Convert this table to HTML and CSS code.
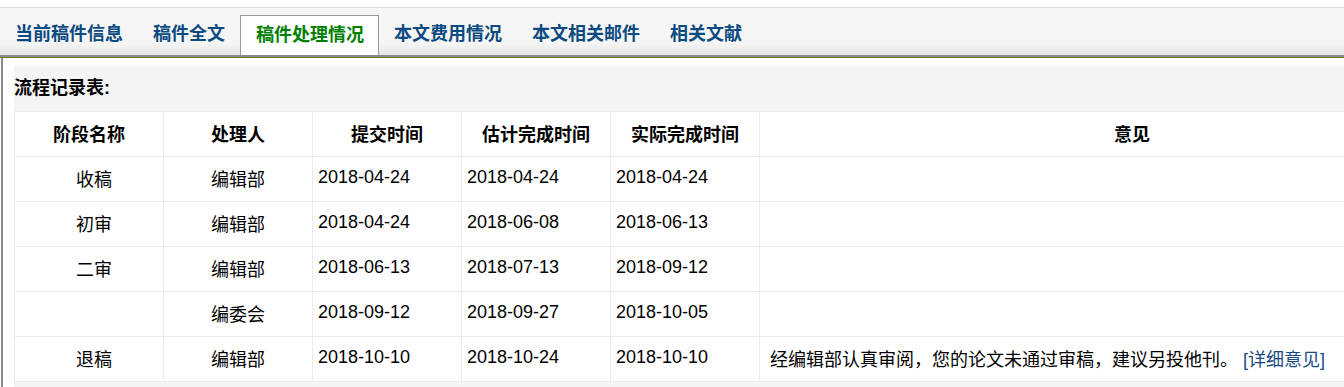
FILE: index.html
```html
<!DOCTYPE html>
<html lang="zh-CN">
<head>
<meta charset="utf-8">
<title>稿件处理情况</title>
<link rel="stylesheet" href="styles.css">
</head>
<body>
<div class="tabbar">
  <a class="tab">当前稿件信息</a>
  <a class="tab">稿件全文</a>
  <a class="tab active">稿件处理情况</a>
  <a class="tab">本文费用情况</a>
  <a class="tab">本文相关邮件</a>
  <a class="tab">相关文献</a>
</div>
<div class="rule"></div>
<div class="main">
  <div class="panel">
    <div class="title">流程记录表:</div>
    <table class="flow">
      <colgroup>
        <col class="c"><col class="c"><col class="c"><col class="c"><col class="c"><col>
      </colgroup>
      <thead>
        <tr><th>阶段名称</th><th>处理人</th><th>提交时间</th><th>估计完成时间</th><th>实际完成时间</th><th>意见</th></tr>
      </thead>
      <tbody>
        <tr><td class="stage">收稿</td><td class="center">编辑部</td><td>2018-04-24</td><td>2018-04-24</td><td>2018-04-24</td><td class="op"></td></tr>
        <tr><td class="stage">初审</td><td class="center">编辑部</td><td>2018-04-24</td><td>2018-06-08</td><td>2018-06-13</td><td class="op"></td></tr>
        <tr><td class="stage">二审</td><td class="center">编辑部</td><td>2018-06-13</td><td>2018-07-13</td><td>2018-09-12</td><td class="op"></td></tr>
        <tr><td class="stage"></td><td class="center">编委会</td><td>2018-09-12</td><td>2018-09-27</td><td>2018-10-05</td><td class="op"></td></tr>
        <tr><td class="stage">退稿</td><td class="center">编辑部</td><td>2018-10-10</td><td>2018-10-24</td><td>2018-10-10</td><td class="op">经编辑部认真审阅，您的论文未通过审稿，建议另投他刊。 <a class="link">[详细意见]</a></td></tr>
      </tbody>
    </table>
  </div>
</div>
</body>
</html>
```
FILE: styles.css
```css
html, body {
  margin: 0;
  padding: 0;
  background: #fff;
  overflow: hidden;
}
body {
  font-family: "Liberation Sans", "Noto Sans CJK SC", sans-serif;
  font-size: 18px;
  color: #000;
  padding-top: 7px;
}
.tabbar {
  display: flex;
  align-items: flex-end;
  height: 47px;
  border-top: 1px solid #dcdcdc;
  border-bottom: 2px solid #8a8a8a;
  background: linear-gradient(to bottom, #f6f6f6 0%, #f5f5f5 75%, #e6e6e2 100%);
  box-sizing: content-box;
}
.tab {
  display: block;
  height: 40px;
  line-height: 38px;
  padding: 0 15px;
  font-weight: bold;
  color: #0b4a80;
  white-space: nowrap;
  box-sizing: border-box;
}
.tab.active {
  background: #fff;
  color: #008000;
  border: 1px solid #9a9a9a;
  border-bottom: none;
  padding: 0 14px 0 15px;
}
.rule {
  height: 1px;
  background: #6b7a1c;
}
.main {
  margin-left: 1px;
  border-left: 2px solid #8a8a8a;
  padding: 8px 0 0 11px;
  height: 340px;
}
.panel {
  background: #f4f4f4;
  height: 100%;
}
.title {
  height: 45px;
  line-height: 44px;
  font-weight: bold;
}
.flow {
  border-collapse: collapse;
  table-layout: fixed;
  width: 1491px;
  background: #fff;
}
.flow col.c {
  width: 149px;
}
.flow th, .flow td {
  border: 1px solid #ebebeb;
  height: 45px;
  padding: 0 5px 3px;
  white-space: nowrap;
  box-sizing: border-box;
}
.flow th {
  font-weight: bold;
  text-align: center;
}
.flow td {
  text-align: left;
}
.flow td.center {
  text-align: center;
}
.flow td.stage {
  text-align: center;
  padding-left: 15px;
}
.flow td.op {
  padding-left: 10px;
}
.link {
  color: #1a4a84;
  text-decoration: none;
}
```
